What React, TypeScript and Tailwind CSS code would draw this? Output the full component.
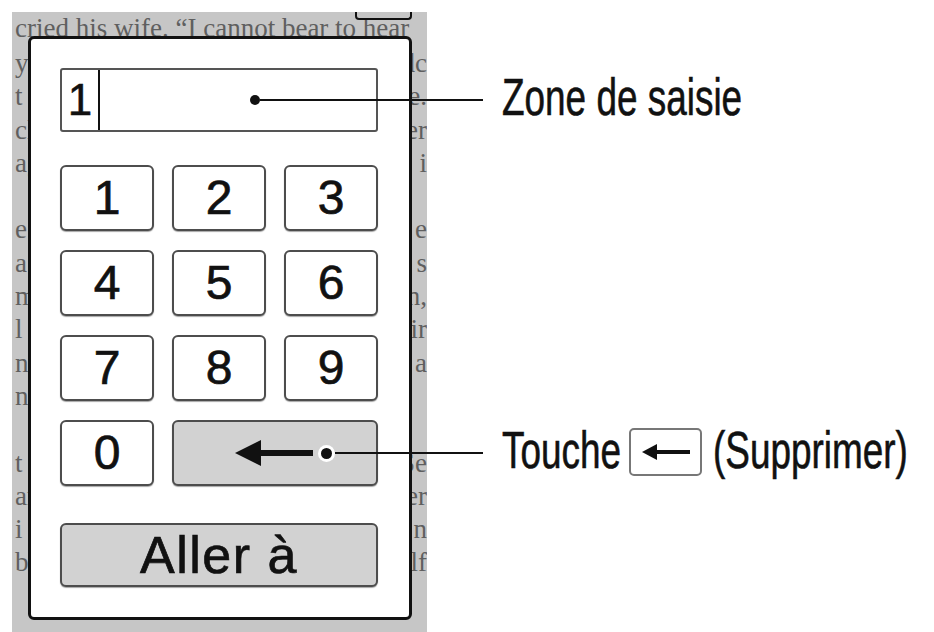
import React from 'react';

const serif = "font-['Liberation_Serif',serif]";
const label = "text-[52px] leading-none text-[#111] whitespace-nowrap origin-left scale-x-[0.71] [-webkit-text-stroke:0.6px_#111]";

// visible scraps of the book page behind the dialog
const pageLines: [string, string][] = [
  ['y', 'dc'],
  ['t', 'e.'],
  ['cl', 'er'],
  ['ag', 'i'],
  ['', ''],
  ['e', 'e'],
  ['a', 's'],
  ['m', 'n,'],
  ['l', 'ir'],
  ['n', 'a'],
  ['ny', ''],
  ['', ''],
  ['t r', 'Se'],
  ['ar', 'er'],
  ['i', 'n'],
  ['b', 'elf'],
];

function Key({ children, gray, wide }: { children?: React.ReactNode; gray?: boolean; wide?: boolean }) {
  return (
    <div
      className={`flex items-center justify-center rounded-[6px] border-2 border-[#4d4d4d] shadow-[0_1px_1px_rgba(0,0,0,0.35)] text-[48px] leading-none text-[#111] [-webkit-text-stroke:0.7px_#111] ${gray ? 'bg-[#d2d2d2]' : 'bg-white'} ${wide ? 'col-span-2' : ''}`}
    >
      {children}
    </div>
  );
}

function Label({ w, children }: { w: number; children: React.ReactNode }) {
  return (
    <div className={`-translate-y-[3px] ${w === 238 ? 'w-[238px]' : w === 120 ? 'w-[120px]' : 'w-[200px]'}`}>
      <div className={label}>{children}</div>
    </div>
  );
}

export default function App() {
  return (
    <div className="relative w-[934px] h-[632px] overflow-hidden bg-white font-['Liberation_Sans',sans-serif]">
      <div className="pl-[12px] pt-[12px]">
        <div className="relative w-[415px] h-[620px] overflow-hidden bg-[#c6c6c6]">
          {/* book text */}
          <div className={`${serif} text-[27px] leading-[33.3px] text-[#5f5f5f] pl-[3px]`}>
            <div className="whitespace-nowrap h-[35px]">cried his wife. {'\u201C'}I cannot bear to hear</div>
            {pageLines.map(([l, r], i) => (
              <div key={i} className="flex justify-between whitespace-nowrap h-[33.3px]">
                <span>{l}</span>
                <span>{r}</span>
              </div>
            ))}
          </div>

          {/* bottom of a button sitting above */}
          <div className="absolute left-[343px] top-[-2px] w-[57px] h-[10px] border-2 border-t-0 border-[#111] rounded-b-[4px]" />

          {/* jump-to-page dialog */}
          <div className="absolute left-[16px] top-[24px] w-[384px] h-[584px] rounded-[6px] border-[3px] border-[#111] bg-white pt-[29px] pl-[29px] pr-[31px]">
            <div className="flex h-[64px] rounded-[3px] border-2 border-[#555] bg-white">
              <div className="flex w-[36px] items-center justify-center text-[44px] leading-none text-[#111] [-webkit-text-stroke:0.5px_#111]">1</div>
              <div className="w-[2px] bg-[#111]" />
              <div className="flex-1" />
            </div>

            <div className="mt-[33px] grid grid-cols-3 auto-rows-[66px] gap-x-[18px] gap-y-[19px]">
              {['1', '2', '3', '4', '5', '6', '7', '8', '9', '0'].map((d) => (
                <Key key={d}>{d}</Key>
              ))}
              <Key gray wide>
                <div className="flex w-full pl-[61px]">
                  <svg width="80" height="30" viewBox="0 0 80 30">
                    <polygon points="0,15 26,2 26,28" fill="#111" />
                    <rect x="24" y="12" width="54" height="6" fill="#111" />
                  </svg>
                </div>
              </Key>
            </div>

            <div className="mt-[37px] flex h-[64px] items-center justify-center rounded-[6px] border-2 border-[#4d4d4d] bg-[#d2d2d2] shadow-[0_1px_1px_rgba(0,0,0,0.35)] text-[52px] leading-none tracking-[1.5px] text-[#111] [-webkit-text-stroke:0.7px_#111]">
              Aller à
            </div>
          </div>
        </div>
      </div>

      {/* callout: input field */}
      <div className="absolute left-[250px] top-[100px] flex -translate-y-1/2 items-center">
        <div className="h-[10px] w-[10px] rounded-full bg-[#111]" />
        <div className="h-[2px] w-[223px] bg-[#111]" />
        <div className="ml-[19px]">
          <Label w={238}>Zone de saisie</Label>
        </div>
      </div>

      {/* callout: delete key */}
      <div className="absolute left-[318px] top-[453px] flex -translate-y-1/2 items-center">
        <div className="flex h-[17px] w-[17px] items-center justify-center rounded-full bg-white">
          <div className="h-[11px] w-[11px] rounded-full bg-[#111]" />
        </div>
        <div className="h-[2px] w-[148px] bg-[#111]" />
        <div className="ml-[19px]">
          <Label w={120}>Touche</Label>
        </div>
        <div className="ml-[7px] mr-[11px] flex h-[48px] w-[73px] -translate-y-[1px] items-center justify-center rounded-[5px] border-2 border-[#777]">
          <svg width="48" height="18" viewBox="0 0 48 18">
            <polygon points="0,9 15,1 15,17" fill="#111" />
            <rect x="13" y="7" width="35" height="4" fill="#111" />
          </svg>
        </div>
        <Label w={200}>(Supprimer)</Label>
      </div>
    </div>
  );
}
